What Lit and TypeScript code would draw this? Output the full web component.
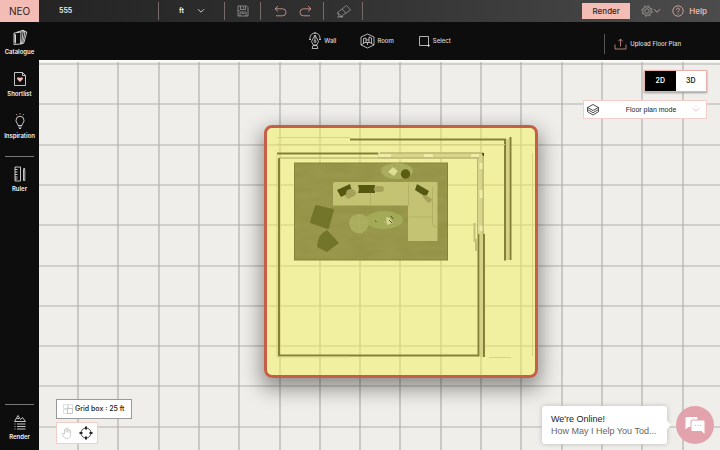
import { LitElement, html, css, svg } from "lit";
import { customElement, state } from "lit/decorators.js";

const icon = (w: number, h: number, box: string, body: unknown) =>
  html`<svg class="icon" width=${w} height=${h} viewBox=${box} aria-hidden="true">${body}</svg>`;

const icons = {
  catalogue: icon(16, 16, "0 0 16 16", svg`<path d="M2 4l7-1-.5 12-6.500.5zM4.500 3.300l6-1.800.5 1.500L9.500 15M9 2.200l3-1 .3 2M8.500 15l2-.3L13 3.200l-2-.4M12.300 2.200l2.500.8-3 11-1.300.5"/><path d="M3.500 5.500v9M2 6h2M2 8h2M2 10h2M2 12h2"/>`),
  shortlist: icon(16, 16, "0 0 16 16", svg`<path d="M2.500 1.500h8l3 3v10h-11zM10.500 1.500v3h3"/><path class="rose-fill" d="M8 11L5.300 8.300C4.300 7 6.200 5.300 8 7c1.800-1.700 3.700 0 2.700 1.300z"/>`),
  bulb: icon(16, 16, "0 0 16 16", svg`<path d="M6 12.500C6 10.500 4 9.800 4 7.300a4 4 0 018 0c0 2.500-2 3.200-2 5.200zM6.300 14h3.400M7 15.500h2"/><path class="rose" d="M8 0v1.500M4.300 1l.8 1.300M11.700 1l-.8 1.300"/>`),
  ruler: icon(16, 16, "0 0 16 16", svg`<path d="M3 1h5.500v14H3zM3 3.500h2.500M3 6h2.500M3 8.500h2.500M3 11h2.500M3 13h2.500M11.500 4v10.500M12.800 4v10.500M11.500 14.500h1.300M11.500 4l.6-2 .7 2"/>`),
  scene: icon(16, 16, "0 0 16 16", svg`<path d="M2.500 7.500L6 1.500l2.500 4 2-2L13.500 7.500zM4.800 4l1.200 1 1-1M5 10h8.500M5 12.500h8.500M5 15h8.500M2.500 10h1M2.500 12.500h1M2.500 15h1"/>`),
  save: icon(12, 12, "0 0 12 12", svg`<path d="M1 1h8.500L11 2.500V11H1zM3.500 1v3.500h5V1M3 11V7h6v4M6.500 2v1.500M4.500 8.500h3M1 5.500h1.500"/>`),
  undo: icon(13, 12, "0 0 13 12", svg`<path d="M4 1L1 3.800 4 6.500M1 3.800h7.500a3.500 3.500 0 010 7H2"/>`),
  redo: icon(13, 12, "0 0 13 12", svg`<path d="M9 1l3 2.800L9 6.500M12 3.800H4.500a3.500 3.500 0 000 7H11"/>`),
  eraser: icon(16, 14, "0 0 16 14", svg`<path d="M1.500 8.500L10.500 1.500l4 4.500L5.500 12zM6 5l4 4.200M1.500 8.500L3 12.500h4M1 13h6"/>`),
  chevron: icon(8, 6, "0 0 8 6", svg`<path d="M1 1.200l3 3 3-3"/>`),
  gear: icon(12, 12, "0 0 12 12", svg`<circle cx="6" cy="6" r="2.200"/><circle cx="6" cy="6" r="4.200"/><circle cx="6" cy="6" r="5.200" stroke-dasharray="2 2.080"/>`),
  help: icon(12, 12, "0 0 12 12", svg`<circle cx="6" cy="6" r="5.200"/><path d="M4.500 4.800C4.500 2.600 7.600 2.700 7.500 4.600 7.400 5.800 6 5.700 6 7.200M6 8.200v1"/>`),
  pen: icon(14, 18, "0 0 14 18", svg`<path d="M7 3L3.500 9.500l1.800 3.500h3.400l1.800-3.500zM7 3v5.500M5 13.500h4l.8 3H4.200z"/><circle cx="7" cy="9.500" r="1"/><path d="M2 7.500V6a5 5 0 0110 0v1.500M1 7.500h2M11 7.500h2M6 1h2"/>`),
  room: icon(15, 16, "0 0 15 16", svg`<path d="M7.500 1l6.500 3v8l-6.500 3L1 12V4zM1 12l4-2.500h5l4 2.500M3.500 10V5.500L6 5v4.500M6 7h3M9 9.500V4l2.500 1V10M7.500 9.500V12"/>`),
  select: icon(13, 13, "0 0 13 13", svg`<path d="M1.500 1.500h9v9h-9z"/><path d="M9 10.500h3M10.500 9v3"/>`),
  upload: icon(13, 12, "0 0 13 12", svg`<path d="M1 6.500V11h11V6.500M6.500 8.500V1.200M4.300 3.300l2.200-2.200 2.200 2.200"/>`),
  layers: icon(14, 14, "0 0 14 14", svg`<path d="M7 1.500l5.500 3-5.500 3-5.500-3zM1.500 4.500v2L7 9.700l5.500-3.200v-2M1.500 6.500v2.200L7 12l5.500-3.300V6.500"/>`),
  grid: icon(10, 10, "0 0 10 10", svg`<path d="M.5 .5h4v4h-4zM5.500 .5h4v4h-4zM.5 5.500h4v4h-4z" opacity=".6"/><path d="M4.500 4.500h5v5h-5z"/>`),
  hand: icon(12, 12, "0 0 12 12", svg`<path d="M3.500 7V2.500q.8-.8 1.500 0V1.300q.8-.8 1.500 0v1q.8-.8 1.500 0v1q.8-.7 1.500 0V8c0 2-1.300 3.500-3.500 3.500-2 0-3-1-3.700-2.500L1 6.500q.8-1 2.500.5M5 2.500v3M6.500 2.300v3M8 3.300v2.500"/>`),
  target: icon(14, 14, "0 0 14 14", svg`<circle cx="7" cy="7" r="5"/><path d="M7 .5v3M7 10.500v3M.5 7h3M10.500 7h3" stroke-width="2"/>`),
  chat: icon(22, 20, "0 0 22 20", svg`<path fill="#fff" stroke="none" d="M2.500 2h10q1 0 1 1v1.500H8.500Q6.500 4.500 6.500 6.500V12H4.500l-3 2.500V3q0-1 1-1z"/><path fill="#fff" stroke="none" d="M8.500 5.500h11q1 0 1 1V19l-3-3h-9q-1 0-1-1V6.500q0-1 1-1z"/><path d="M11 10.500h1M13.500 10.500h1M16 10.500h1" stroke="#e2a3ac"/>`),
};

const STEP = 40.3;
const stops = (first: number, count: number) =>
  Array.from({ length: count }, (_, i) => Math.round(first + i * STEP));

@customElement("plan-canvas")
class PlanCanvas extends LitElement {
  static styles = css`
    :host { display: block; position: absolute; inset: 0; overflow: hidden; background: #efeeea; border-top: 2px solid #fafaf7; }
    .grid { position: absolute; width: 100%; height: 100%; stroke: #b2b0ab; stroke-width: 1.2; }
    .plan { position: absolute; left: 225px; top: 63px; width: 274px; height: 253px; box-sizing: border-box;
      border: 3px solid #c55f45; border-radius: 8px; background: rgba(243, 241, 86, 0.5);
      box-shadow: 0 8px 20px 3px rgba(0, 0, 0, 0.4); }
    .drawing { display: block; width: 268px; height: 247px; }
  `;

  render() {
    return html`
      <svg class="grid" aria-hidden="true">
        ${stops(39, 80).map((x) => svg`<line x1=${x} x2=${x} y1="0" y2="100%"/>`)}
        ${stops(2, 60).map((y) => svg`<line x1="0" x2="100%" y1=${y} y2=${y}/>`)}
      </svg>
      <div class="plan">
        <svg class="drawing" viewBox="267 128 268 247" role="img" aria-label="Floor plan">
          <defs><filter id="weave" x="0" y="0" width="1" height="1"><feTurbulence type="fractalNoise" baseFrequency=".04 .14" numOctaves="2" seed="4"/>
            <feColorMatrix values="0 0 0 0 .42  0 0 0 0 .42  0 0 0 0 .12  .9 0 0 0 -.25"/></filter></defs>
          <g fill="none" stroke="#83803a" stroke-width="2">
            <path d="M350 139.500h155v121" />
            <path d="M510.500 137v123" />
            <path d="M277 153.500h101" />
            <path d="M279 158v197.500h199.500V158" />
            <path d="M484 234v123" />
          </g>
          <g fill="none" stroke="#d5d283">
            <path d="M277 137.500h73M277 144.500h228M277 155v202h72M489 357.500h22M532.500 153v203" />
            <path d="M507.500 139v121M481.500 234v123" stroke-width="3" />
          </g>
          <path d="M378 155.500h103V234" fill="none" stroke="#d9d58b" stroke-width="6"/>
          <path d="M279 158h200M380 153h103v81" fill="none" stroke="#aaa761"/>
          <path d="M379 155.500h12M424 155.500h9M471 155.500h8M481 163v6M481 190v8M481 226v5" stroke="#efeda8" stroke-width="3"/>
          <path d="M482 153h2v3h-1z" fill="#45400c"/>
          <path d="M474.500 223v19M476 239v12" stroke="#c3c077" stroke-width="2"/>
          <rect x="294.500" y="163" width="153" height="97" fill="#949347"/>
          <rect x="294.500" y="163" width="153" height="97" filter="url(#weave)" opacity=".5"/>
          <rect x="294.500" y="163" width="153" height="97" fill="none" stroke="#858338"/>
          <ellipse cx="397" cy="171" rx="16" ry="8" fill="#a8ac5c"/>
          <path d="M393 167l5 4-4 5-6-4z" fill="#dfdc94"/>
          <circle cx="405.500" cy="174" r="4.700" fill="#5c5c13"/>
          <path d="M335 182h102.500v59H408v-35.500h-75V184q0-2 2-2z" fill="#c4c374"/>
          <path d="M370.500 193v12M408.500 183v23M409 217h24M432.500 187v37q0 3 4 3" fill="none" stroke="#b2b166"/>
          <path d="M337 190l13-6 1 4 2 3-12 6z" fill="#565812"/>
          <path d="M358 185h17v8h-17l1-4z" fill="#565812"/>
          <path d="M417 184l12 7-3 6-11-7z" fill="#565812"/>
          <g fill="#a7a25a">
            <ellipse cx="351" cy="193" rx="5" ry="4"/><path d="M345 197l4-6 5 4-5 4z"/>
            <rect x="374" y="186" width="10" height="6" rx="3"/>
            <path d="M422 196l4-1 6 4-1 3-3 1z"/>
          </g>
          <path d="M316 206l17 4-5 18-17-6z" fill="#73752a" stroke="#73752a" stroke-width="2" stroke-linejoin="round"/>
          <path d="M327 230l12 13-12 9-10-5q0-12 10-17z" fill="#73752a"/>
          <ellipse cx="384" cy="220" rx="19" ry="9" fill="#a2a957"/>
          <circle cx="359" cy="223.500" r="9.800" fill="#aaad5e"/>
          <path d="M359 214v19M349 223h19" stroke="#b4b76a" stroke-width=".5"/>
          <path d="M386 217l4 1 3 5-6 2z" fill="#d6d294"/>
          <path d="M391 216l2 3M389 220l3 3M375 221h3" stroke="#4e582c"/>
          <path d="M376 220l2 1M384 222h3" stroke="#c4bf75"/>
        </svg>
      </div>`;
  }
}

@customElement("app-root")
class AppRoot extends LitElement {
  @state() view = "2D";

  static styles = css`
    :host { display: flex; flex-direction: column; min-height: 100vh; background: #0d0d0d; color: #f2f2f2;
      font: 7px/10px Inter, "Liberation Sans", sans-serif; }
    button, input, select { font: inherit; color: inherit; background: none; border: 0; padding: 0; margin: 0;
      border-radius: 0; appearance: none; box-sizing: border-box; }
    button, select { cursor: pointer; }
    .icon { display: block; flex: none; fill: none; stroke: currentColor; stroke-width: 0.8; }
    .rose { stroke: #e8a79e; }
    .rose-fill { fill: #f6bcb4; stroke: none; }

    .top { display: flex; height: 22px; background: linear-gradient(90deg, #242324, #303030 45%, #4c4c4c); }
    .brand { display: grid; place-items: center; width: 39px; background: #f3bcb4; color: #2c2424;
      text-decoration: none; font-size: 10px; }
    .cell { display: flex; align-items: center; justify-content: center; position: relative; box-sizing: border-box; }
    .cell::after { content: ""; position: absolute; right: 0; top: 2px; bottom: 2px; width: 1px; background: #776b69; }
    .name-cell { width: 120px; padding: 0 20px; }
    .name { width: 100%; font-size: 7px; font-weight: 600; }
    .unit-cell { width: 66px; justify-content: flex-start; padding-left: 20px; gap: 13px; }
    .unit { font-size: 7px; font-weight: 600; }
    .save-cell { width: 36px; color: #9b9998; }
    .history { width: 63px; gap: 12px; color: #dda096; }
    .erase-cell { width: 39px; color: #969493; }
    .account { display: flex; align-items: center; margin-left: auto; padding-right: 13px; color: #e9b4ad; }
    .render { width: 48px; height: 16px; background: #f3bcb4; color: #332523; font-size: 8px; font-weight: 500; }
    .settings { display: flex; align-items: center; margin-left: 11px; color: #aaa19f; }
    .settings .icon + .icon { color: #e9b4ad; }
    .help { display: flex; align-items: center; gap: 5px; margin-left: 11px; font-size: 8px; font-weight: 600; }

    .body { display: flex; flex: 1; }
    .side { display: flex; flex-direction: column; width: 39px; flex: none; box-sizing: border-box; padding: 7px 0 8px; }
    .side button { display: flex; flex-direction: column; align-items: center; gap: 2px; margin-bottom: 14px; white-space: nowrap;
      font: 600 6px/10px Inter, sans-serif; }
    .side button:last-child { margin-bottom: 0; }
    .rule { width: 29px; height: 1px; margin: 1px auto 9px; border: 0; background: #777; }
    .low { margin-top: auto; }
    .main { display: flex; flex-direction: column; flex: 1; min-width: 0; }
    .tools { display: grid; grid-template-columns: 1fr auto 1fr; align-items: center; height: 38px; font-size: 6px; font-weight: 500; }
    .modes { display: flex; gap: 24px; grid-column: 2; }
    .tool { display: flex; align-items: center; gap: 2px; color: #dcdcdc; }
    .upload { justify-self: end; align-self: end; gap: 3px; height: 20px; margin-bottom: 6px; padding: 0 39px 0 9px; border-left: 1px solid #555; }
    .upload .icon { color: #d99b90; }

    .stage { position: relative; display: flex; flex-direction: column; justify-content: space-between; flex: 1;
      box-sizing: border-box; padding: 10px 6px 6px 17px; color: #222; }
    .upper, .lower { position: relative; display: flex; }
    .upper { flex-direction: column; align-items: flex-end; gap: 8px; padding-right: 7px; }
    .switch { display: flex; box-sizing: border-box; width: 63px; height: 22px; border: 1px solid #eab0ab; background: #fff;
      box-shadow: 0 1px 2px #999; }
    .switch button { flex: 1; font-weight: 600; }
    .switch .on { background: #000; color: #fff; }
    .mode { display: flex; align-items: center; position: relative; box-sizing: border-box; width: 124px; height: 19px;
      padding: 0 6px 0 2px; background: #fff; border: 1px solid #f3cec8; color: #222; }
    .mode select { flex: 1; height: 17px; padding-left: 10px; text-align-last: center; font: 7px/10px "Liberation Sans", sans-serif; }
    .pink { color: #e9b4ad; display: flex; }
    .lower { justify-content: space-between; align-items: flex-end; }
    .left { display: flex; flex-direction: column; align-items: flex-start; gap: 3px; }
    .scale { display: flex; align-items: center; gap: 2px; box-sizing: border-box; height: 20px; padding: 0 7px 0 6px; background: #fff;
      border: 1px solid #999; font-weight: 500; }
    .scale .icon { color: #bbb; }
    .pan { display: flex; align-items: center; justify-content: center; gap: 6px; box-sizing: border-box; width: 42px; height: 22px;
      background: #fff; border: 1px solid #f3cec8; }
    .pan .hand { color: #c4c4c4; }
    .chat { display: flex; align-items: center; gap: 9px; }
    .bubble { position: relative; box-sizing: border-box; width: 125px; height: 38px; padding: 7px 9px; border-radius: 3px; background: #fff;
      box-shadow: 0 0 5px #bbb; font: 9px/12px "Liberation Sans", sans-serif; color: #222; white-space: nowrap; }
    .bubble::after { content: ""; position: absolute; right: -3px; top: 16px; width: 6px; height: 6px; background: #fff; transform: rotate(45deg); }
    .bubble p { margin: 0; }
    .bubble .sub { color: #666; }
    .talk { display: grid; place-items: center; width: 38px; height: 38px; border-radius: 50%; background: #e2a3ac; }
  `;

  render() {
    const side = (glyph: unknown, label: string) => html`<button>${glyph}<span>${label}</span></button>`;
    const tool = (glyph: unknown, label: string) => html`<button class="tool">${glyph}<span>${label}</span></button>`;
    return html`
      <header class="top">
        <a class="brand" href="#">NEO</a>
        <div class="cell name-cell"><input class="name" aria-label="Project name" value="555" /></div>
        <div class="cell unit-cell">
          <select class="unit" aria-label="Units"><option>ft</option></select>${icons.chevron}
        </div>
        <div class="cell save-cell"><button aria-label="Save">${icons.save}</button></div>
        <div class="cell history">
          <button aria-label="Undo">${icons.undo}</button><button aria-label="Redo">${icons.redo}</button>
        </div>
        <div class="cell erase-cell"><button aria-label="Erase">${icons.eraser}</button></div>
        <div class="account">
          <button class="render">Render</button>
          <button class="settings" aria-label="Settings">${icons.gear}${icons.chevron}</button>
          <button class="help">${icons.help}Help</button>
        </div>
      </header>
      <div class="body">
        <nav class="side">
          ${side(icons.catalogue, "Catalogue")} ${side(icons.shortlist, "Shortlist")} ${side(icons.bulb, "Inspiration")}
          <hr class="rule" />
          ${side(icons.ruler, "Ruler")}
          <hr class="rule low" />
          ${side(icons.scene, "Render")}
        </nav>
        <main class="main">
          <div class="tools">
            <div class="modes">${tool(icons.pen, "Wall")}${tool(icons.room, "Room")}${tool(icons.select, "Select")}</div>
            <button class="tool upload">${icons.upload}<span>Upload Floor Plan</span></button>
          </div>
          <section class="stage">
            <plan-canvas></plan-canvas>
            <div class="upper">
              <div class="switch">
                ${["2D", "3D"].map((v) => html`<button class=${this.view === v ? "on" : ""}
                  aria-pressed=${this.view === v} @click=${() => (this.view = v)}>${v}</button>`)}
              </div>
              <div class="mode">
                ${icons.layers}
                <select aria-label="View mode"><option>Floor plan mode</option></select>
                <span class="pink">${icons.chevron}</span>
              </div>
            </div>
            <div class="lower">
              <div class="left">
                <div class="scale">${icons.grid}<span>Grid box : 25 ft</span></div>
                <div class="pan">
                  <button class="hand" aria-label="Pan">${icons.hand}</button>
                  <button aria-label="Centre the plan">${icons.target}</button>
                </div>
              </div>
              <div class="chat">
                <div class="bubble"><p>We're Online!</p><p class="sub">How May I Help You Tod...</p></div>
                <button class="talk" aria-label="Open chat">${icons.chat}</button>
              </div>
            </div>
          </section>
        </main>
      </div>`;
  }
}
